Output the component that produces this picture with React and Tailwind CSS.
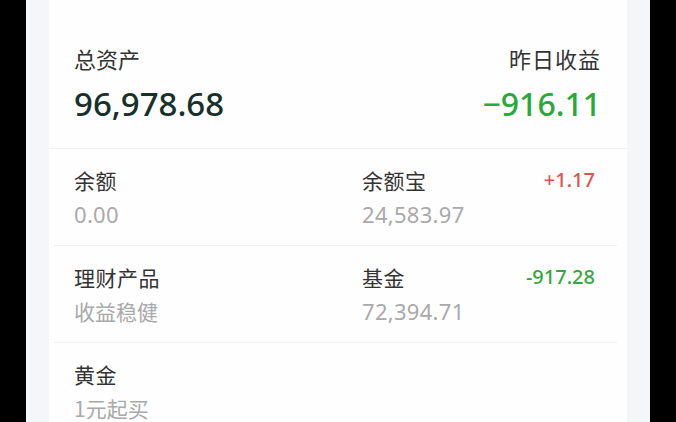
import React from "react";

const num = { fontFamily: '"Noto Sans", "Noto Sans CJK SC", sans-serif' };
const cjk = { fontFamily: '"Noto Sans CJK SC", "Noto Sans", sans-serif' };

function Cell({ label, value, cjkValue, delta, deltaColor }) {
  return (
    <div className="flex items-start justify-between">
      <div className="flex flex-col">
        <div className="text-[21px] leading-[26px] text-[#333333] tracking-[0.5px]" style={cjk}>{label}</div>
        {cjkValue ? (
          <div className="mt-[9px] text-[21px] leading-[24px] text-[#a9a9a9]" style={cjk}>{value}</div>
        ) : (
          <div className="mt-[9px] text-[22px] leading-[24px] text-[#a9a9a9] tracking-[0.3px]" style={num}>{value}</div>
        )}
      </div>
      {delta && (
        <div className={`text-[20px] leading-[26px] font-medium ${deltaColor}`} style={num}>{delta}</div>
      )}
    </div>
  );
}

function Row({ left, right, last }) {
  return (
    <div className="flex flex-col shrink-0">
      <div className="grid grid-cols-[288px_1fr] pl-[25px] pr-[32px] pt-[18px] h-[96px] shrink-0">
        <Cell {...left} />
        {right ? <Cell {...right} /> : <div />}
      </div>
      {!last && <div className="h-px ml-[5px] mr-[10px] bg-[#f1f1f4] shrink-0" />}
    </div>
  );
}

export default function App() {
  return (
    <div className="w-[676px] h-[422px] overflow-hidden bg-black px-[26px]">
      <div className="h-full bg-[#f5f6f8] px-[23px]">
        <div className="h-full bg-[#fefeff] flex flex-col overflow-hidden">
          <div className="flex justify-between pl-[25px] pr-[26px] pt-[44px] h-[148px] shrink-0">
            <div className="flex flex-col">
              <div className="text-[22px] leading-[28px] text-[#333333]" style={cjk}>总资产</div>
              <div className="mt-[14px] text-[33px] leading-[36px] font-medium text-[#16302a]" style={num}>96,978.68</div>
            </div>
            <div className="flex flex-col items-end">
              <div className="text-[22px] leading-[28px] text-[#333333] tracking-[1px]" style={cjk}>昨日收益</div>
              <div className="mt-[14px] text-[32px] leading-[36px] font-medium text-[#2aa838]" style={num}>−916.11</div>
            </div>
          </div>
          <div className="h-px bg-[#f1f1f4] shrink-0" />
          <Row
            left={{ label: "余额", value: "0.00" }}
            right={{ label: "余额宝", value: "24,583.97", delta: "+1.17", deltaColor: "text-[#e0524f]" }}
          />
          <Row
            left={{ label: "理财产品", value: "收益稳健", cjkValue: true }}
            right={{ label: "基金", value: "72,394.71", delta: "-917.28", deltaColor: "text-[#35a83d]" }}
          />
          <Row left={{ label: "黄金", value: "1元起买", cjkValue: true }} last />
        </div>
      </div>
    </div>
  );
}
